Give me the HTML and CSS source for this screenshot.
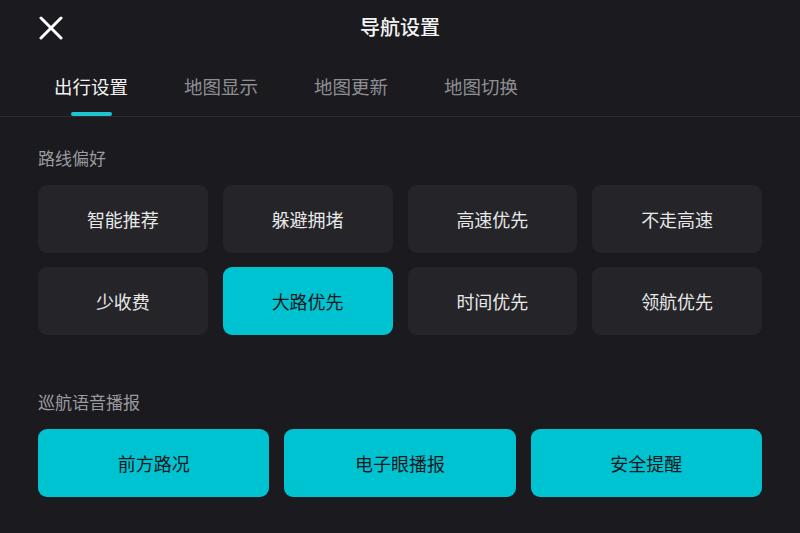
FILE: index.html
```html
<html>
<head>
<meta charset="utf-8">
<link rel="stylesheet" href="styles.css">
</head>
<body>
	<header class="top_bar">
		<a href="#" class="close_btn">
			<svg width="24" height="24" viewBox="0 0 24 24"><path d="M2 2 L22 22 M22 2 L2 22" stroke="#fff" stroke-width="3" stroke-linecap="round" fill="none"/></svg>
		</a>
		<div class="top_title">导航设置</div>
	</header>
	<nav class="tab_bar">
		<a href="#" class="tab tab-active">出行设置</a>
		<a href="#" class="tab">地图显示</a>
		<a href="#" class="tab">地图更新</a>
		<a href="#" class="tab">地图切换</a>
	</nav>
	<section class="settings">
		<div class="group_label">路线偏好</div>
		<div class="option_grid four_cols">
			<div class="option">智能推荐</div>
			<div class="option">躲避拥堵</div>
			<div class="option">高速优先</div>
			<div class="option">不走高速</div>
			<div class="option">少收费</div>
			<div class="option option-on">大路优先</div>
			<div class="option">时间优先</div>
			<div class="option">领航优先</div>
		</div>
		<div class="group_label group_label_second">巡航语音播报</div>
		<div class="option_grid three_cols">
			<div class="option option-on">前方路况</div>
			<div class="option option-on">电子眼播报</div>
			<div class="option option-on">安全提醒</div>
		</div>
	</section>
</body>
</html>
```
FILE: styles.css
```css
html, body{
	margin:0;
	padding:0;
	background:#1b1b1f;
	font-family: "Noto Sans CJK SC", "Noto Sans", sans-serif;
	color:#fff;
}
body{
	width:800px;
	height:533px;
	overflow:hidden;
}
.top_bar{
	height:54px;
	position:relative;
	display:flex;
	align-items:center;
	justify-content:center;
}
.close_btn{
	position:absolute;
	left:39px;
	top:16px;
	display:block;
	width:24px;
	height:24px;
}
.top_title{
	font-size:20px;
	line-height:54px;
	font-weight:500;
	color:#f4f4f4;
}
.tab_bar{
	display:flex;
	gap:56px;
	padding-left:54px;
	height:62px;
	border-bottom:1px solid #2c2c31;
	box-sizing:content-box;
}
.tab{
	display:flex;
	flex-direction:column;
	align-items:center;
	padding-top:20px;
	font-size:18.5px;
	line-height:24px;
	color:#8e8e93;
	text-decoration:none;
}
.tab:after{
	content:'';
	display:block;
	width:41px;
	height:4px;
	margin-top:14px;
	border-radius:2px;
	background:transparent;
}
.tab-active{
	color:#f2f2f2;
}
.tab-active:after{
	background:#1fc4d3;
}
.settings{
	padding:29px 38px 0 38px;
}
.group_label{
	font-size:17px;
	line-height:24px;
	color:#9a9a9f;
	margin-bottom:15px;
}
.group_label_second{
	margin-top:55px;
}
.option_grid{
	display:grid;
	column-gap:15px;
	row-gap:14px;
}
.four_cols{
	grid-template-columns:repeat(4, 1fr);
}
.three_cols{
	grid-template-columns:repeat(3, 1fr);
}
.option{
	height:68px;
	border-radius:9px;
	background:#252529;
	color:#e8e8e8;
	font-size:18px;
	display:flex;
	align-items:center;
	justify-content:center;
}
.option-on{
	background:#00c3d2;
	color:#16181c;
}
```
